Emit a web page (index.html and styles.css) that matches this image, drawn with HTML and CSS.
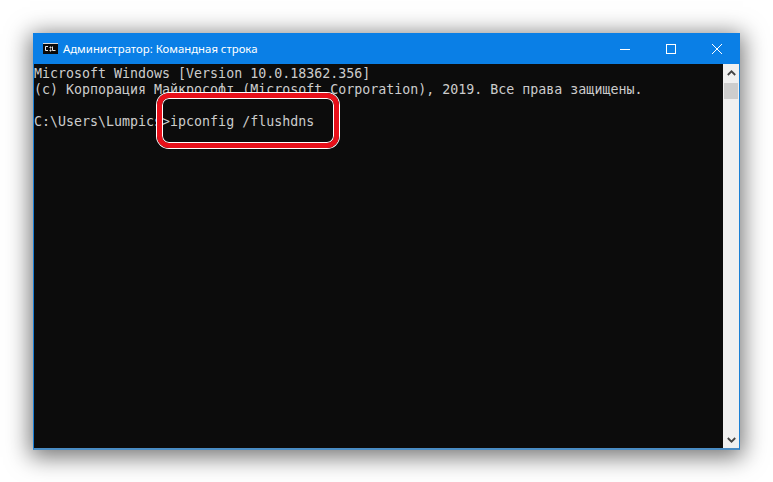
FILE: index.html
```html
<!DOCTYPE html>
<html lang="ru">
<head>
<meta charset="utf-8">
<title>Командная строка</title>
<link rel="stylesheet" href="styles.css">
</head>
<body>
<div class="window">
  <header class="titlebar">
    <svg class="app-icon" width="15" height="11" viewBox="0 0 15 11">
      <rect x="0" y="0" width="15" height="11" fill="#0a0a0a"/>
      <rect x="0" y="0" width="15" height="1" fill="#d8d8d8"/>
      <path d="M5 3.5H2.5V7.5H5M7 4h1v1H7zM7 7h1v1H7zM9.5 3.5V7.5H12.5" fill="none" stroke="#e8e8e8" stroke-width="1"/>
    </svg>
    <span class="title">Администратор: Командная строка</span>
    <div class="controls">
      <span class="ctl"><svg width="10" height="10" viewBox="0 0 10 10"><path d="M0 5.5H10" stroke="#fff" stroke-width="1"/></svg></span>
      <span class="ctl"><svg width="10" height="10" viewBox="0 0 10 10"><rect x=".5" y=".5" width="9" height="9" fill="none" stroke="#fff" stroke-width="1"/></svg></span>
      <span class="ctl"><svg width="10" height="10" viewBox="0 0 10 10"><path d="M0 0L10 10M10 0L0 10" stroke="#fff" stroke-width="1"/></svg></span>
    </div>
  </header>
  <div class="body">
    <pre class="console">Microsoft Windows [Version 10.0.18362.356]
(c) Корпорация Майкрософт (Microsoft Corporation), 2019. Все права защищены.

C:\Users\Lumpics&gt;ipconfig /flushdns</pre>
    <div class="scrollbar">
      <span class="arrow"><svg width="9" height="6" viewBox="0 0 9 6"><path d="M.8 5L4.5 1.3L8.2 5" fill="none" stroke="#444" stroke-width="1.8"/></svg></span>
      <div class="thumb"></div>
      <div class="track"></div>
      <span class="arrow"><svg width="9" height="6" viewBox="0 0 9 6"><path d="M.8 1L4.5 4.7L8.2 1" fill="none" stroke="#444" stroke-width="1.8"/></svg></span>
    </div>
  </div>
</div>
<div class="highlight"></div>
</body>
</html>
```
FILE: styles.css
```css
html, body {
  margin: 0;
  height: 100%;
  background: #fff;
  overflow: hidden;
}
body {
  padding: 33px 33px 34px;
  box-sizing: border-box;
  position: relative;
}
.window {
  height: 415px;
  display: flex;
  flex-direction: column;
  border: 1px solid #1a7fd4;
  border-top: 0;
  border-bottom: 2px solid #4a8cc4;
  box-shadow: 0 4px 22px 3px rgba(0, 0, 0, .55);
}
.titlebar {
  height: 31px;
  flex: none;
  background: #0a7fe6;
  display: flex;
  align-items: center;
  padding-left: 10px;
  margin: 0 -1px;
}
.app-icon {
  flex: none;
}
.title {
  margin-left: 5px;
  font: 11.35px/16px "Noto Sans", sans-serif;
  color: #fff;
}
.controls {
  margin-left: auto;
  display: flex;
  height: 100%;
}
.ctl {
  width: 46px;
  display: flex;
  align-items: center;
  justify-content: center;
}
.body {
  flex: 1;
  display: flex;
  min-height: 0;
  background: #0c0c0c;
}
.console {
  flex: 1;
  margin: 0;
  padding: 2px 0 0 0;
  font: 13.3px/16px "DejaVu Sans Mono", monospace;
  color: #cccccc;
  white-space: pre;
  overflow: hidden;
}
.scrollbar {
  width: 16px;
  flex: none;
  background: #f0f0f0;
  display: flex;
  flex-direction: column;
}
.arrow {
  height: 17px;
  flex: none;
  display: flex;
  align-items: center;
  justify-content: center;
}
.thumb {
  height: 16px;
  flex: none;
  margin: 2px 1px 0;
  background: #cdcdcd;
}
.track {
  flex: 1;
}
.highlight {
  position: absolute;
  left: 157px;
  top: 93px;
  width: 182px;
  height: 55px;
  box-sizing: border-box;
  border: 5px solid #e8101a;
  border-radius: 12px;
  box-shadow: 0 0 0 1px #fff, inset 0 0 0 1px #fff;
}
```
